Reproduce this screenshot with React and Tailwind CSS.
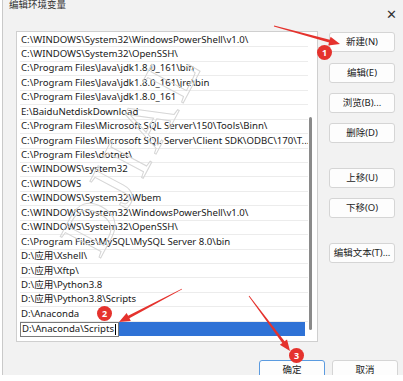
import React from 'react';

const paths = [
  'C:\\WINDOWS\\System32\\WindowsPowerShell\\v1.0\\',
  'C:\\WINDOWS\\System32\\OpenSSH\\',
  'C:\\Program Files\\Java\\jdk1.8.0_161\\bin',
  'C:\\Program Files\\Java\\jdk1.8.0_161\\jre\\bin',
  'C:\\Program Files\\Java\\jdk1.8.0_161',
  'E:\\BaiduNetdiskDownload',
  'C:\\Program Files\\Microsoft SQL Server\\150\\Tools\\Binn\\',
  'C:\\Program Files\\Microsoft SQL Server\\Client SDK\\ODBC\\170\\T...',
  'C:\\Program Files\\dotnet\\',
  'C:\\WINDOWS\\system32',
  'C:\\WINDOWS',
  'C:\\WINDOWS\\System32\\Wbem',
  'C:\\WINDOWS\\System32\\WindowsPowerShell\\v1.0\\',
  'C:\\WINDOWS\\System32\\OpenSSH\\',
  'C:\\Program Files\\MySQL\\MySQL Server 8.0\\bin',
  'D:\\应用\\Xshell\\',
  'D:\\应用\\Xftp\\',
  'D:\\应用\\Python3.8',
  'D:\\应用\\Python3.8\\Scripts',
  'D:\\Anaconda',
];

// red tapered arrow, tail -> tip
function arrow(x1, y1, x2, y2) {
  const dx = x2 - x1;
  const dy = y2 - y1;
  const len = Math.hypot(dx, dy);
  const ux = dx / len;
  const uy = dy / len;
  const nx = -uy;
  const ny = ux;
  const bx = x2 - ux * 11;
  const by = y2 - uy * 11;
  const p = (x, y, w) => `${x + nx * w},${y + ny * w}`;
  return [
    p(x1, y1, 0.4),
    p(bx, by, 1.4),
    p(bx, by, 4.5),
    `${x2},${y2}`,
    p(bx, by, -4.5),
    p(bx, by, -1.4),
    p(x1, y1, -0.4),
  ].join(' ');
}

function SideButton({ label, className = '' }) {
  return (
    <button className={`shrink-0 w-[66px] h-[20px] bg-[#fdfdfd] border border-[#d5d5d5] rounded-[3px] text-[9.5px] text-[#222] ${className}`}>
      {label}
    </button>
  );
}

function Badge({ n, className }) {
  return (
    <div className={`absolute w-[15px] h-[15px] rounded-full bg-[#e5322d] text-white text-[9px] font-bold flex items-center justify-center ${className}`}>
      {n}
    </div>
  );
}

export default function App() {
  return (
    <div className="relative w-[403px] h-[381px] bg-white overflow-hidden font-['Noto_Sans','Noto_Sans_CJK_SC',sans-serif]">
      <div className="ml-[2px] h-[375px] border-l border-[#c9c9c9] bg-[#f2f2f2] flex flex-col overflow-hidden">
        {/* 标题栏 */}
        <div className="shrink-0 h-[31px] flex items-start justify-between pl-[6px] pr-[6px]">
          <span className="text-[9.5px] leading-[10px] text-[#333]">编辑环境变量</span>
          <span className="text-[13px] leading-none text-[#333] mt-[8px]">✕</span>
        </div>

        <div className="shrink-0 flex">
          {/* 列表 */}
          <div className="relative shrink-0 ml-[13px] w-[302px] h-[311px] bg-white border border-[#cfcfcf] pt-[1px] pl-[3px]">
            {paths.map((p, i) => (
              <div key={i} className="h-[14.45px] w-[288px] border-b border-[#ececec] flex items-center pl-[1px] text-[9.6px] text-[#1a1a1a] whitespace-nowrap overflow-hidden">
                {p}
              </div>
            ))}
            <div className="h-[14.45px] w-[285px] flex">
              <div className="w-[99px] h-[15px] border border-[#7a7a7a] bg-white flex items-center pl-[1px] text-[9.6px] text-[#1a1a1a] whitespace-nowrap">
                D:\Anaconda\Scripts<span className="ml-[1px] w-px h-[11px] bg-black" />
              </div>
              <div className="flex-1 h-[14px] bg-[#2f72d6]" />
            </div>
            {/* 滚动条 */}
            <div className="absolute left-[292px] top-[85px] w-[3px] h-[213px] rounded-full bg-[#8a8a8a]" />
          </div>

          {/* 右侧按钮 */}
          <div className="ml-[11px] mt-[1px] flex flex-col">
            <SideButton label="新建(N)" />
            <SideButton label="编辑(E)" className="mt-[11px]" />
            <SideButton label="浏览(B)..." className="mt-[10px]" />
            <SideButton label="删除(D)" className="mt-[10px]" />
            <SideButton label="上移(U)" className="mt-[25px]" />
            <SideButton label="下移(O)" className="mt-[10px]" />
            <SideButton label="编辑文本(T)..." className="mt-[25px]" />
          </div>
        </div>

        {/* 底部按钮 */}
        <div className="shrink-0 flex justify-end gap-[7px] pr-[5px] mt-[18px]">
          <button className="shrink-0 w-[66px] h-[20px] bg-[#fdfdfd] border border-[#5b9be0] rounded-[3px] text-[9.5px] text-[#222]">确定</button>
          <button className="shrink-0 w-[66px] h-[20px] bg-[#fdfdfd] border border-[#d5d5d5] rounded-[3px] text-[9.5px] text-[#222]">取消</button>
        </div>
      </div>

      {/* 水印 */}
      <div className="absolute left-[20px] top-[115px] -rotate-[62deg] origin-center text-[70px] leading-none tracking-[6px] font-['Liberation_Serif',serif] text-transparent [-webkit-text-stroke:1px_#d6d6d6] pointer-events-none select-none">
        DJIAL
      </div>

      {/* 标注箭头 */}
      <svg className="absolute inset-0 pointer-events-none" width="403" height="381">
        <polygon points={arrow(274, 26, 340, 44)} fill="#e5322d" />
        <polygon points={arrow(182, 289, 119, 322)} fill="#e5322d" />
        <polygon points={arrow(249, 296, 290, 351)} fill="#e5322d" />
      </svg>
      <Badge n="1" className="left-[317px] top-[45px]" />
      <Badge n="2" className="left-[97px] top-[306px]" />
      <Badge n="3" className="left-[289px] top-[348px]" />
    </div>
  );
}
